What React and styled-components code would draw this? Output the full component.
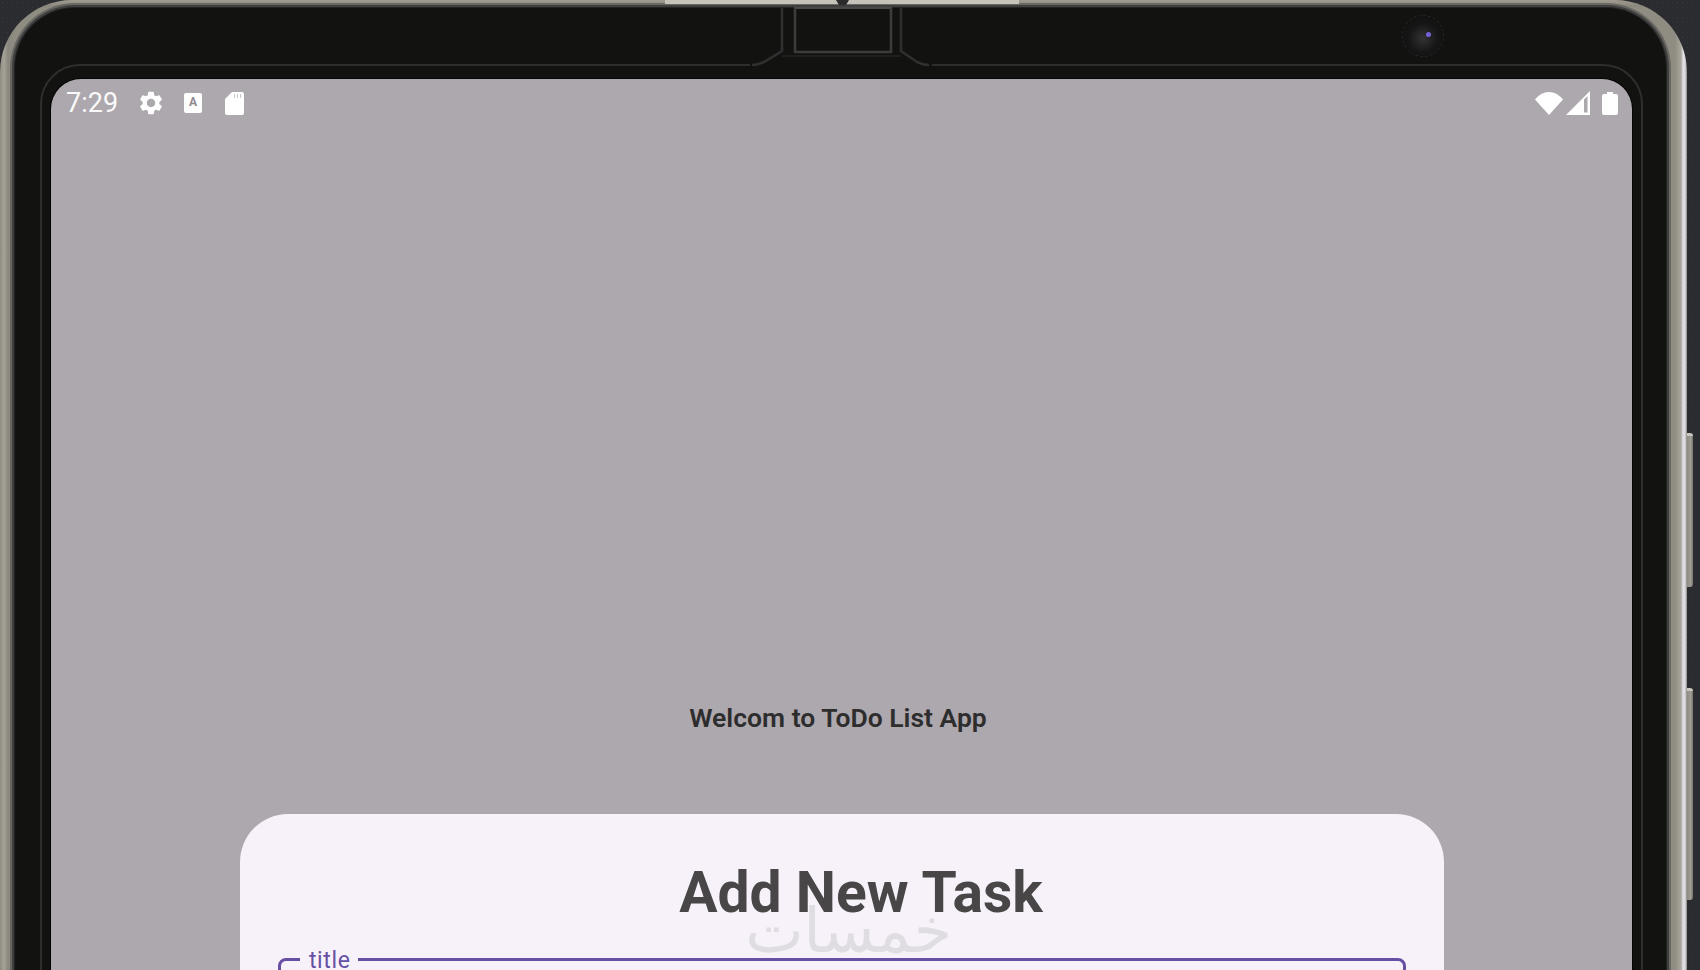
import React from "react";
import styled, { createGlobalStyle } from "styled-components";

const Global = createGlobalStyle`
  html, body { margin: 0; padding: 0; height: 100%; background: #2a2c2f; overflow: hidden; }
  #root { height: 970px; overflow: hidden; }
  * { box-sizing: border-box; }
`;

const Stage = styled.div`
  position: relative;
  width: 1700px;
  height: 970px;
  overflow: hidden;
  background-color: #2a2c2f;
  background-image: radial-gradient(#34363a 0.6px, transparent 0.8px);
  background-size: 5px 5px;
  font-family: Roboto, "Noto Sans", sans-serif;
`;

const Device = styled.div`
  position: relative;
  width: 1687px;
  height: 1120px;
  padding: 8px 21px 0 15px;
  border-radius: 72px;
  background-color: #8f8c82;
  background-image:
    linear-gradient(180deg, #a09c90 0, #948f84 4px, #8a877c 6px, transparent 8px),
    linear-gradient(90deg, #8f8b80 0, #a5a298 4px, #8a877e 8px, #8f8c82 16px, #8f8c82 1672px, #8f8c84 1675px, #a9a69d 1681px, #e2dfe4 1683px, #dedbe2 1685px, #8a8880 1687px);
`;

const SideKey = styled.div`
  position: absolute;
  left: 100%;
  top: ${(p) => p.$top}px;
  width: 6px;
  height: ${(p) => p.$height}px;
  border-radius: 0 3px 3px 0;
  background: linear-gradient(90deg, #8c8a82, #a19e95 60%, #77756e);
  border-top: 3px solid #c9c7c0;
`;

const Bezel = styled.div`
  position: relative;
  height: 100%;
  padding: 56px 23px 0 25px;
  border-radius: 60px;
  background: #121211;
  box-shadow: 0 0 0 1px #232324, 0 0 0 3px #3f3f40, 0 0 0 5px rgba(80, 79, 76, 0.6);
`;

const Ring = styled.div`
  height: 100%;
  padding: 13px 9px 0 9px;
  border: 2px solid #2e2e2f;
  border-radius: 40px;
`;

const Screen = styled.div`
  height: 100%;
  border-radius: 30px;
  background: #aca8ad;
  box-shadow: 0 0 0 1px #050505;
  display: flex;
  flex-direction: column;
  overflow: hidden;
`;

const StatusBar = styled.div`
  flex: none;
  display: flex;
  align-items: center;
  justify-content: space-between;
  height: 48px;
  padding: 0 14px 0 15px;
  color: #fff;
`;

const StatusGroup = styled.div`
  display: flex;
  align-items: center;
  gap: ${(p) => p.$gap}px;
`;

const Clock = styled.span`
  font-size: 27px;
  font-weight: 400;
  line-height: 30px;
  color: #fbfafb;
`;

const KeyboardBadge = styled.span`
  width: 18px;
  height: 20px;
  border-radius: 2px;
  background: #fff;
  color: #8d898e;
  font-size: 12px;
  font-weight: 700;
  line-height: 19px;
  text-align: center;
`;

const Icon = styled.svg`
  display: block;
  flex: none;
  fill: #fff;
`;

const Main = styled.main`
  flex: none;
  height: 687px;
  padding: 573px 7px 0 0;
  text-align: center;
`;

const Welcome = styled.h2`
  margin: 0;
  font-size: 26.5px;
  line-height: 36px;
  font-weight: 600;
  color: #2e2d2e;
`;

const Sheet = styled.section`
  position: relative;
  flex: none;
  width: 1204px;
  height: 300px;
  margin-left: 189px;
  padding: 46px 38px 0;
  border-radius: 48px 48px 0 0;
  background: #f7f2fa;
`;

const SheetTitle = styled.h1`
  margin: 0 0 24px;
  padding-left: 38px;
  font-size: 57px;
  line-height: 66px;
  font-weight: 700;
  color: #484646;
  text-align: center;
`;

const Watermark = styled.span`
  position: absolute;
  left: 506px;
  top: 79px;
  width: 206px;
  font-family: "DejaVu Sans", sans-serif;
  font-size: 62px;
  font-weight: 400;
  line-height: 76px;
  color: #dfdde1;
  text-align: center;
  white-space: nowrap;
  direction: rtl;
`;

const Field = styled.fieldset`
  margin: 0;
  padding: 0 19px 20px;
  min-width: 0;
  height: 90px;
  border: 3px solid #6750a4;
  border-radius: 8px;
`;

const FieldLabel = styled.legend`
  margin-left: 0;
  padding: 0 8px 0 9px;
  font-size: 23px;
  line-height: 18px;
  letter-spacing: 0.6px;
  color: #6750a4;
  transform: translateY(2px);
`;

const CameraWrap = styled.div`
  position: absolute;
  left: 1402px;
  top: 15px;
  width: 42px;
  height: 42px;
  border-radius: 50%;
  border: 1px dashed #262626;
  background: radial-gradient(circle at 50% 55%, #333335 0, #272728 20%, #161617 48%, #121211 72%);
`;

const CameraDot = styled.span`
  position: absolute;
  left: 23px;
  top: 16px;
  width: 5px;
  height: 5px;
  border-radius: 50%;
  background: #7560d8;
`;

const NotchArt = styled.svg`
  position: absolute;
  left: 660px;
  top: 0;
  display: block;
`;

const GearPath =
  "M19.14 12.94c.04-.3.06-.61.06-.94 0-.32-.02-.64-.07-.94l2.03-1.58c.18-.14.23-.41.12-.61l-1.92-3.32c-.12-.22-.37-.29-.59-.22l-2.39.96c-.5-.38-1.03-.7-1.62-.94l-.36-2.54c-.04-.24-.24-.41-.48-.41h-3.84c-.24 0-.43.17-.47.41l-.36 2.54c-.59.24-1.13.57-1.62.94l-2.39-.96c-.22-.08-.47 0-.59.22L2.74 8.87c-.12.21-.08.47.12.61l2.03 1.58c-.05.3-.09.63-.09.94s.02.64.07.94l-2.03 1.58c-.18.14-.23.41-.12.61l1.92 3.32c.12.22.37.29.59.22l2.39-.96c.5.38 1.03.7 1.62.94l.36 2.54c.05.24.24.41.48.41h3.84c.24 0 .44-.17.47-.41l.36-2.54c.59-.24 1.13-.56 1.62-.94l2.39.96c.22.08.47 0 .59-.22l1.92-3.32c.12-.22.07-.47-.12-.61l-2.01-1.58zM12 15.6c-1.98 0-3.6-1.62-3.6-3.6s1.62-3.6 3.6-3.6 3.6 1.62 3.6 3.6-1.62 3.6-3.6 3.6z";

const Notch = () => (
  <NotchArt width="360" height="80" viewBox="0 0 360 80" fill="none">
    <rect x="5" y="0" width="354" height="4" fill="#c6c3ba" />
    <path d="M176 0h13l-3 5h-7z" fill="#2b2b2e" />
    <path d="M90 63H272V67H90z" fill="#121211" />
    <path d="M92 65q6 0 12-3l18-11V8" stroke="#2f2f30" strokeWidth="2.6" />
    <path d="M269 65q-6 0-12-3l-16-11V8" stroke="#2f2f30" strokeWidth="2.6" />
    <path d="M122 56H241" stroke="#1f1f20" strokeWidth="2" />
    <path d="M134 8h98" stroke="#4a4a4b" strokeWidth="2" />
    <path d="M135 8V52H231V8" stroke="#3c3c3d" strokeWidth="2.6" />
  </NotchArt>
);

export default function App() {
  return (
    <Stage>
      <Global />
      <Device>
        <SideKey $top={433} $height={154} />
        <SideKey $top={688} $height={212} />
        <Bezel>
          <Ring>
            <Screen>
              <StatusBar>
                <StatusGroup $gap={21}>
                  <Clock>7:29</Clock>
                  <Icon width="28" height="28" viewBox="0 0 24 24" style={{ margin: "0 -2px" }}>
                    <path d={GearPath} />
                  </Icon>
                  <KeyboardBadge>A</KeyboardBadge>
                  <Icon width="19" height="23" viewBox="0 0 19 23" style={{ marginLeft: 2 }}>
                    <path d="M7 0h10a2 2 0 0 1 2 2v19a2 2 0 0 1-2 2H2a2 2 0 0 1-2-2V7z" />
                    <path d="M9 2h1v4H9zM12 2h1v4h-1zM15 2h1v4h-1z" fill="#c9c6ca" />
                  </Icon>
                </StatusGroup>
                <StatusGroup $gap={3}>
                  <Icon width="28" height="23" viewBox="0 0 28 23">
                    <path d="M14 23 0 7.500C3.500 3 8.500 0 14 0s10.500 3 14 7.500z" />
                  </Icon>
                  <Icon width="24" height="24" viewBox="0 0 24 24" style={{ marginRight: 9 }}>
                    <path d="M24 0v24H0zM21.500 5 18 8.500V21.500h3.500z" fillRule="evenodd" />
                  </Icon>
                  <Icon width="16" height="23" viewBox="0 0 16 23">
                    <path d="M5 0h6v2h3a2 2 0 0 1 2 2v17a2 2 0 0 1-2 2H2a2 2 0 0 1-2-2V4a2 2 0 0 1 2-2h3z" />
                  </Icon>
                </StatusGroup>
              </StatusBar>
              <Main>
                <Welcome>Welcom to ToDo List App</Welcome>
              </Main>
              <Sheet>
                <SheetTitle>Add New Task</SheetTitle>
                <Watermark>خمسات</Watermark>
                <Field>
                  <FieldLabel>title</FieldLabel>
                </Field>
              </Sheet>
            </Screen>
          </Ring>
        </Bezel>
      </Device>
      <Notch />
      <CameraWrap>
        <CameraDot />
      </CameraWrap>
    </Stage>
  );
}
